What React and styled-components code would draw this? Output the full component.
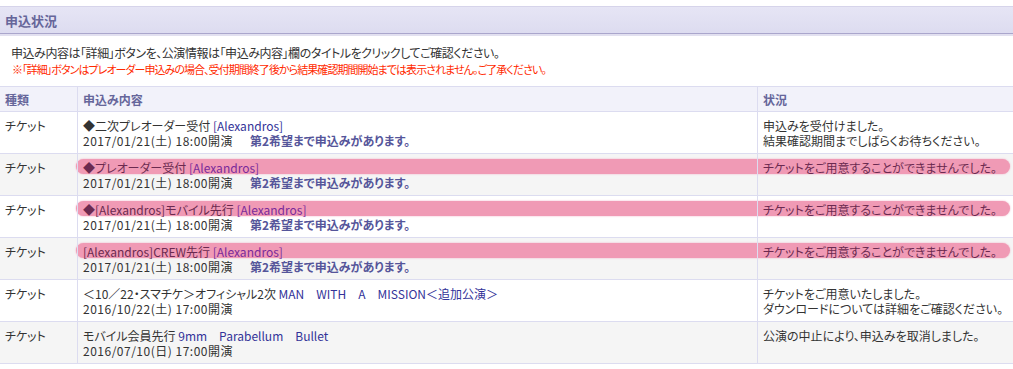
import styled, { createGlobalStyle } from 'styled-components'

const GlobalStyle = createGlobalStyle`
    body {
        margin: 0;
        background: #fff;
        font-family: "Noto Sans CJK JP", "Noto Sans", sans-serif;
        font-feature-settings: "palt";
        color: #333;
    }
`

const Page = styled.div`
    width: 1013px;
    padding-top: 6px;
`

const SectionHead = styled.div`
    height: 26px;
    border-top: 1px solid #d6d4ea;
    border-bottom: 1px solid #aaa6cc;
    box-shadow: 0 2px 0 #e2e0f0;
    background: linear-gradient(#e6e5f5, #dddcf0);
    display: flex;
    align-items: center;
    padding-left: 5px;
    font-size: 13px;
    font-weight: bold;
    color: #66669a;
`

const Notice = styled.div`
    padding: 10px 0 0 11px;
    height: 43px;
    box-sizing: border-box;
`

const NoticeLine = styled.p`
    margin: 0;
    line-height: 17px;
    font-size: 12px;
    letter-spacing: -0.45px;
`

const Caution = styled.p`
    margin: 0 0 0 1px;
    line-height: 17px;
    font-size: 11px;
    letter-spacing: -0.95px;
    color: #ff2a00;
`

const Table = styled.div`
    margin-top: 9px;
    border-top: 1px solid #dcdcf0;
`

const Row = styled.div`
    position: relative;
    display: grid;
    grid-template-columns: 77px 680px 1fr;
    min-height: ${p => p.$head ? 24 : 41}px;
    border-bottom: 1px solid #dcdcf0;
    background: ${p => p.$head ? '#f2f2fa' : p.$shade ? '#f5f5f5' : '#fff'};
`

const Cell = styled.div`
    position: relative;
    z-index: 1;
    padding: ${p => p.$head ? '5px 5px 0' : '6px 5px 0'};
    border-left: ${p => p.$first ? 'none' : '1px solid #dcdcf0'};
    font-size: 12px;
    line-height: 15px;
    font-weight: ${p => p.$head ? 'bold' : 'normal'};
    color: ${p => p.$head ? '#66669a' : '#333'};
`

const Pill = styled.div`
    position: absolute;
    left: 76px;
    right: 3px;
    top: 5px;
    height: 15px;
    border-radius: 8px;
    background: #f09ab5;
    box-shadow: 0 0 2px 0 #f3a9c0;
    z-index: 0;
`

const Title = styled.div`
    color: ${p => p.$hl ? '#6b2a50' : '#333'};
`

const Artist = styled.span`
    color: ${p => p.$hl ? '#7a2a9a' : '#333399'};
`

const DateLine = styled.div`
    display: flex;
    gap: 17px;
`

const DateText = styled.span`
    letter-spacing: 0.5px;
`

const Hope = styled.span`
    font-weight: bold;
    color: #55559a;
`

const Status = styled.div`
    color: ${p => p.$hl ? '#6b2a50' : '#333'};
`

const rows = [
    {
        title: '◆二次プレオーダー受付 ',
        artist: '[Alexandros]',
        date: '2017/01/21(土) 18:00開演',
        hope: true,
        status: ['申込みを受付けました。', '結果確認期間までしばらくお待ちください。'],
    },
    {
        title: '◆プレオーダー受付 ',
        artist: '[Alexandros]',
        date: '2017/01/21(土) 18:00開演',
        hope: true,
        hl: true,
        status: ['チケットをご用意することができませんでした。'],
    },
    {
        title: '◆[Alexandros]モバイル先行 ',
        artist: '[Alexandros]',
        date: '2017/01/21(土) 18:00開演',
        hope: true,
        hl: true,
        status: ['チケットをご用意することができませんでした。'],
    },
    {
        title: '[Alexandros]CREW先行 ',
        artist: '[Alexandros]',
        date: '2017/01/21(土) 18:00開演',
        hope: true,
        hl: true,
        status: ['チケットをご用意することができませんでした。'],
    },
    {
        title: '＜10／22・スマチケ＞オフィシャル2次 ',
        artist: 'MAN　WITH　A　MISSION＜追加公演＞',
        date: '2016/10/22(土) 17:00開演',
        status: ['チケットをご用意いたしました。', 'ダウンロードについては詳細をご確認ください。'],
    },
    {
        title: 'モバイル会員先行 ',
        artist: '9mm　Parabellum　Bullet',
        date: '2016/07/10(日) 17:00開演',
        status: ['公演の中止により、申込みを取消しました。'],
    },
]

const App = () => {
    return (
        <Page>
            <GlobalStyle />
            <SectionHead>申込状況</SectionHead>
            <Notice>
                <NoticeLine>申込み内容は「詳細」ボタンを、公演情報は「申込み内容」欄のタイトルをクリックしてご確認ください。</NoticeLine>
                <Caution>※「詳細」ボタンはプレオーダー申込みの場合、受付期間終了後から結果確認期間開始までは表示されません。ご了承ください。</Caution>
            </Notice>
            <Table>
                <Row $head>
                    <Cell $head $first>種類</Cell>
                    <Cell $head>申込み内容</Cell>
                    <Cell $head>状況</Cell>
                </Row>
                {rows.map((r, i) => (
                    <Row key={i} $shade={i % 2 === 1}>
                        {r.hl && <Pill />}
                        <Cell $first>チケット</Cell>
                        <Cell>
                            <Title $hl={r.hl}>
                                {r.title}<Artist $hl={r.hl}>{r.artist}</Artist>
                            </Title>
                            <DateLine>
                                <DateText>{r.date}</DateText>
                                {r.hope && <Hope>第2希望まで申込みがあります。</Hope>}
                            </DateLine>
                        </Cell>
                        <Cell>
                            {r.status.map(s => <Status key={s} $hl={r.hl}>{s}</Status>)}
                        </Cell>
                    </Row>
                ))}
            </Table>
        </Page>
    )
}

export default App
